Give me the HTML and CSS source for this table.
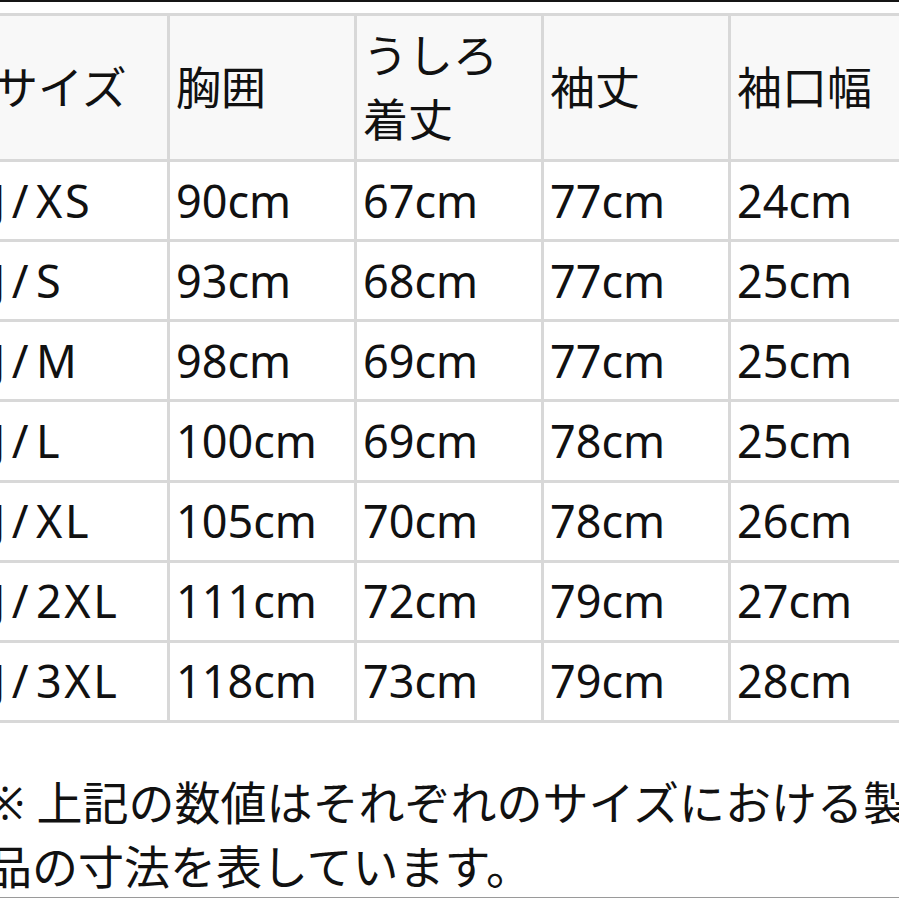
FILE: index.html
```html
<!DOCTYPE html>
<html lang="ja">
<head>
<meta charset="utf-8">
<title>サイズ表</title>
<link rel="stylesheet" href="styles.css">
</head>
<body>
<div class="topline"></div>
<div class="content">
  <table class="size-table">
    <thead>
      <tr>
        <th class="size">サイズ</th>
        <th>胸囲</th>
        <th>うしろ着丈</th>
        <th>袖丈</th>
        <th>袖口幅</th>
      </tr>
    </thead>
    <tbody>
      <tr><td class="size">J<span class="sl">/</span>XS</td><td>90cm</td><td>67cm</td><td>77cm</td><td>24cm</td></tr>
      <tr><td class="size">J<span class="sl">/</span>S</td><td>93cm</td><td>68cm</td><td>77cm</td><td>25cm</td></tr>
      <tr><td class="size">J<span class="sl">/</span>M</td><td>98cm</td><td>69cm</td><td>77cm</td><td>25cm</td></tr>
      <tr><td class="size">J<span class="sl">/</span>L</td><td>100cm</td><td>69cm</td><td>78cm</td><td>25cm</td></tr>
      <tr><td class="size">J<span class="sl">/</span>XL</td><td>105cm</td><td>70cm</td><td>78cm</td><td>26cm</td></tr>
      <tr><td class="size">J<span class="sl">/</span>2XL</td><td>111cm</td><td>72cm</td><td>79cm</td><td>27cm</td></tr>
      <tr><td class="size">J<span class="sl">/</span>3XL</td><td>118cm</td><td>73cm</td><td>79cm</td><td>28cm</td></tr>
    </tbody>
  </table>
  <p class="note">※ 上記の数値はそれぞれのサイズにおける製品の寸法を表しています。</p>
</div>
<div class="bottomline"></div>
</body>
</html>
```

FILE: styles.css
```css
html, body {
  margin: 0;
  padding: 0;
  background: #ffffff;
  overflow: hidden;
}

body {
  width: 899px;
  height: 899px;
  position: relative;
  font-family: "Noto Sans", "Noto Sans CJK JP", sans-serif;
  color: #111111;
}

.topline {
  height: 2px;
  background: #151515;
}

.content {
  margin-left: -20px;
  padding-top: 11px;
  width: 960px;
}

.size-table {
  border-collapse: separate;
  border-spacing: 0;
  table-layout: fixed;
  width: 938px;
  border-top: 3px solid #d8d8d8;
  border-left: 3px solid #d8d8d8;
  font-size: 45px;
  line-height: 64px;
}

.size-table th,
.size-table td {
  border-right: 3px solid #d8d8d8;
  border-bottom: 3px solid #d8d8d8;
  text-align: left;
  vertical-align: middle;
  font-weight: normal;
  padding-left: 6px;
  padding-right: 6px;
  box-sizing: content-box;
  width: 172px;
}

.size-table th {
  background: #f8f8f8;
  padding-top: 7.5px;
  padding-bottom: 7.5px;
}

.size-table td {
  padding-top: 6.57px;
  padding-bottom: 6.57px;
}

.size-table .size {
  padding-left: 10px;
  padding-right: 2px;
}

.size-table td.size {
  letter-spacing: 2.5px;
  white-space: nowrap;
}

.sl {
  margin-left: 4px;
  margin-right: 5px;
}

.note {
  margin: 47px 0 0 6px;
  width: 935px;
  font-size: 46px;
  line-height: 64px;
}

.bottomline {
  position: absolute;
  left: 0;
  right: 0;
  top: 897px;
  height: 1px;
  background: #9a9a9a;
}
```
